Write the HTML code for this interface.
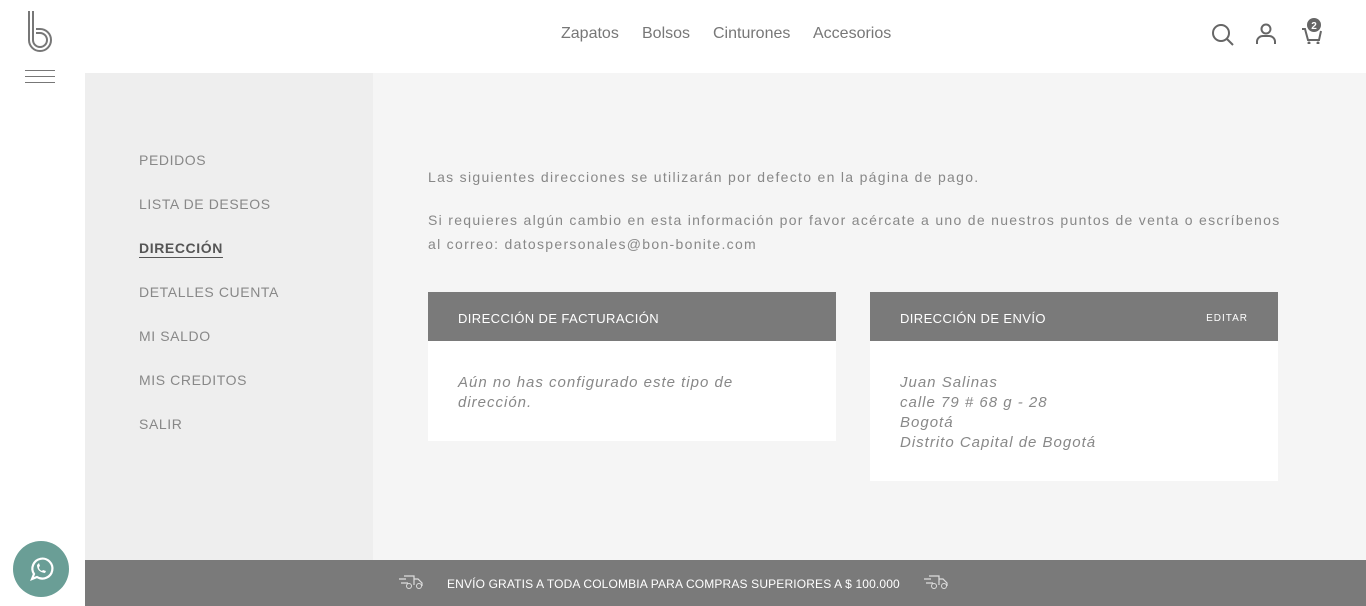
<!DOCTYPE html>
<html><head><meta charset="utf-8"><style>
*{margin:0;padding:0;box-sizing:border-box}
body{width:1366px;height:606px;overflow:hidden;background:#fff;font-family:"Liberation Sans",sans-serif;position:relative;color:#777}
.abs{position:absolute}
.nav a{position:absolute;top:25px;font-size:16px;color:#777;text-decoration:none}
.side{left:85px;top:73px;width:288px;height:487px;background:#eeeeee}
.side div{position:absolute;left:54px;font-size:14px;letter-spacing:.6px;color:#888}
.main{left:373px;top:73px;width:993px;height:487px;background:#f5f5f5}
.p{font-size:14px;letter-spacing:1.3px;color:#888;position:absolute;left:428px}
.ch{background:#7a7a7a;color:#fff;font-size:13px;letter-spacing:.4px;height:49px;padding:19px 30px 0}
.cb{background:#fff;font-style:italic;font-size:15px;letter-spacing:1px;color:#888;padding:32px 30px 0;line-height:20px}
</style></head><body>
<svg class="abs" style="left:26px;top:10px" width="30" height="45" viewBox="0 0 30 45">
<path d="M3 1 V30 A11 11 0 1 0 14 19 H10" fill="none" stroke="#777" stroke-width="2"/>
<path d="M7 1 V30 A7 7 0 1 0 14 23 H10" fill="none" stroke="#777" stroke-width="2"/>
</svg>
<div class="abs" style="left:25px;top:70px;width:30px;height:1px;background:#777"></div>
<div class="abs" style="left:25px;top:76px;width:30px;height:1px;background:#777"></div>
<div class="abs" style="left:25px;top:82px;width:30px;height:1px;background:#777"></div>
<div class="nav"><a style="left:561px">Zapatos</a><a style="left:642px">Bolsos</a><a style="left:713px">Cinturones</a><a style="left:813px">Accesorios</a></div>
<svg class="abs" style="left:1210px;top:22px" width="26" height="26"><circle cx="11" cy="11" r="8" fill="none" stroke="#666" stroke-width="2"/><path d="M17 17 L23 23" stroke="#666" stroke-width="2"/></svg>
<svg class="abs" style="left:1255px;top:22px" width="24" height="24"><circle cx="11" cy="7" r="4.5" fill="none" stroke="#666" stroke-width="2"/><path d="M2 22 V19 A6 6 0 0 1 8 14 H14 A6 6 0 0 1 20 19 V22" fill="none" stroke="#666" stroke-width="2"/></svg>
<svg class="abs" style="left:1300px;top:16px" width="26" height="28"><path d="M2 13 H5 L8 24 H19 L21 15" fill="none" stroke="#666" stroke-width="2"/><circle cx="9" cy="27" r="1.5" fill="#666"/><circle cx="18" cy="27" r="1.5" fill="#666"/><circle cx="14" cy="9" r="7" fill="#666"/><text x="14" y="13" font-size="10" font-weight="bold" fill="#fff" text-anchor="middle" font-family="Liberation Sans">2</text></svg>
<div class="abs side">
<div style="top:79px">PEDIDOS</div>
<div style="top:123px">LISTA DE DESEOS</div>
<div style="top:167px;color:#555;font-weight:bold;text-decoration:underline;text-underline-offset:4px">DIRECCIÓN</div>
<div style="top:211px">DETALLES CUENTA</div>
<div style="top:255px">MI SALDO</div>
<div style="top:299px">MIS CREDITOS</div>
<div style="top:343px">SALIR</div>
</div>
<div class="abs main"></div>
<div class="p" style="top:169px">Las siguientes direcciones se utilizarán por defecto en la página de pago.</div>
<div class="p" style="top:208px;line-height:24px;width:855px;white-space:nowrap">Si requieres algún cambio en esta información por favor acércate a uno de nuestros puntos de venta o escríbenos<br>al correo: datospersonales@bon-bonite.com</div>
<div class="abs" style="left:428px;top:292px;width:408px"><div class="ch">DIRECCIÓN DE FACTURACIÓN</div><div class="cb" style="height:100px">Aún no has configurado este tipo de dirección.</div></div>
<div class="abs" style="left:870px;top:292px;width:408px"><div class="ch">DIRECCIÓN DE ENVÍO<span style="float:right;font-size:10px;margin-top:2px;letter-spacing:1px">EDITAR</span></div><div class="cb" style="height:140px">Juan Salinas<br>calle 79 # 68 g - 28<br>Bogotá<br>Distrito Capital de Bogotá</div></div>
<div class="abs" style="left:85px;top:560px;width:1281px;height:46px;background:#7a7a7a"></div>
<div class="abs" style="left:447px;top:577px;color:#fff;font-size:12px;letter-spacing:.15px;white-space:nowrap">ENVÍO GRATIS A TODA COLOMBIA PARA COMPRAS SUPERIORES A $ 100.000</div>
<svg class="abs" style="left:398px;top:574px" width="26" height="16"><path d="M1 5 H8 M3 9 H10 M6 2 H16 V11 M16 5 H20 L24 9 V12" fill="none" stroke="#ddd" stroke-width="1.2"/><circle cx="11" cy="12" r="2.5" fill="none" stroke="#ddd"/><circle cx="21" cy="12" r="2.5" fill="none" stroke="#ddd"/></svg>
<svg class="abs" style="left:923px;top:574px" width="26" height="16"><path d="M1 5 H8 M3 9 H10 M6 2 H16 V11 M16 5 H20 L24 9 V12" fill="none" stroke="#ddd" stroke-width="1.2"/><circle cx="11" cy="12" r="2.5" fill="none" stroke="#ddd"/><circle cx="21" cy="12" r="2.5" fill="none" stroke="#ddd"/></svg>
<div class="abs" style="left:13px;top:541px;width:56px;height:56px;border-radius:50%;background:#6a9e96"></div>
<svg class="abs" style="left:27px;top:555px" width="28" height="28" viewBox="0 0 28 28"><path d="M5 24 L7 19 A10 10 0 1 1 10 22 Z" fill="none" stroke="#fff" stroke-width="2.2"/><path d="M10 10 Q10 17 18 18 L19 16 L16 15 L15 16 Q12 15 12 12 L13 11 L12 8 Z" fill="#fff"/></svg>
</body></html>
